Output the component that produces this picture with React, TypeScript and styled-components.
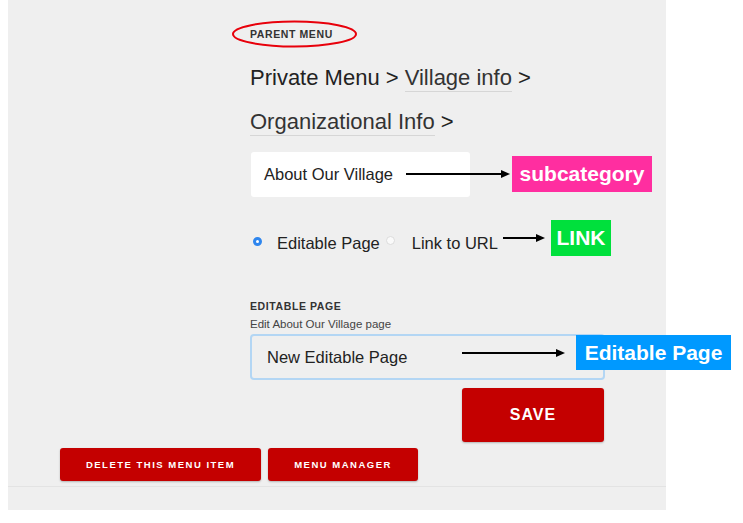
import React from "react";
import styled, { createGlobalStyle } from "styled-components";

const Global = createGlobalStyle`
  html, body { margin: 0; padding: 0; background: #ffffff; }
  body { font-family: "Liberation Sans", Arial, Helvetica, sans-serif; color: #222; }
`;

const Panel = styled.div`
  margin-left: 8px;
  width: 658px;
  height: 510px;
  background: #efefef;
  display: flex;
  flex-direction: column;
  box-sizing: border-box;
  padding-top: 28px;
`;

const Content = styled.div`
  padding-left: 242px;
  display: flex;
  flex-direction: column;
  align-items: flex-start;
`;

const SectionLabel = styled.div<{ $top?: number }>`
  position: relative;
  font-size: 10.5px;
  line-height: 12px;
  font-weight: bold;
  color: #333;
  letter-spacing: 0.6px;
  margin-top: ${(p) => p.$top ?? 0}px;
`;

const Ellipse = styled.svg`
  position: absolute;
  left: -18px;
  top: -8px;
  overflow: visible;
`;

const Crumbs = styled.div`
  margin-top: 16px;
  font-size: 22px;
  line-height: 44px;
  color: #222;
`;

const CrumbLine = styled.div`
  white-space: nowrap;
`;

const CrumbLink = styled.span`
  color: #333;
  border-bottom: 1px solid #d6d6d6;
  padding-bottom: 1px;
`;

const FieldRow = styled.div<{ $top: number }>`
  position: relative;
  margin-top: ${(p) => p.$top}px;
`;

const WhiteBox = styled.div`
  width: 219px;
  height: 45px;
  margin-left: 1px;
  background: #ffffff;
  border-radius: 3px;
  box-sizing: border-box;
  padding-left: 13px;
  display: flex;
  align-items: center;
  font-size: 16.5px;
  color: #222;
`;

const RadioRow = styled.div`
  position: relative;
  margin-top: 36px;
  height: 20px;
  display: flex;
  align-items: center;
  font-size: 16.5px;
  color: #222;
`;

const Radio = styled.span<{ $on?: boolean }>`
  width: 9px;
  height: 9px;
  border-radius: 50%;
  box-sizing: border-box;
  display: inline-block;
  margin: ${(p) => (p.$on ? "-4px 15px 0 3px" : "-5px 17px 0 6px")};
  background: ${(p) => (p.$on ? "#ffffff" : "#fafafa")};
  border: ${(p) => (p.$on ? "3px solid #2f86ee" : "1px solid #dcdcdc")};
`;

const Hint = styled.div`
  margin-top: 6px;
  font-size: 11.5px;
  line-height: 12px;
  color: #444;
`;

const TextInput = styled.div`
  width: 355px;
  height: 46px;
  box-sizing: border-box;
  border: 2px solid #b3d6f4;
  border-radius: 4px;
  padding-left: 15px;
  display: flex;
  align-items: center;
  font-size: 16.5px;
  color: #222;
`;

const Button = styled.button<{ $w: number; $h: number; $fs: number; $ls: number }>`
  width: ${(p) => p.$w}px;
  height: ${(p) => p.$h}px;
  background: #c40000;
  color: #ffffff;
  border: none;
  border-radius: 3px;
  box-shadow: 0 1px 2px rgba(0, 0, 0, 0.25);
  font-family: "Liberation Sans", Arial, sans-serif;
  font-weight: bold;
  font-size: ${(p) => p.$fs}px;
  letter-spacing: ${(p) => p.$ls}px;
  padding: 0;
  cursor: pointer;
`;

const SaveWrap = styled.div`
  margin-top: 8px;
  margin-left: 212px;
`;

const BottomRow = styled.div`
  margin-top: 6px;
  padding-left: 52px;
  display: flex;
  gap: 7px;
`;

const Separator = styled.div`
  margin-top: 5px;
  height: 1px;
  background: #e3e3e3;
`;

const Annotation = styled.div<{ $left: number; $top: number }>`
  position: absolute;
  left: ${(p) => p.$left}px;
  top: ${(p) => p.$top}px;
  display: flex;
  align-items: center;
`;

const Tag = styled.div<{ $bg: string; $w: number; $h: number }>`
  background: ${(p) => p.$bg};
  width: ${(p) => p.$w}px;
  height: ${(p) => p.$h}px;
  color: #ffffff;
  font-weight: bold;
  font-size: 21px;
  display: flex;
  align-items: center;
  justify-content: center;
  white-space: nowrap;
`;

const Arrow = ({ len, gap }: { len: number; gap: number }) => (
  <svg width={len + gap} height="10" viewBox={`0 0 ${len + gap} 10`} style={{ display: "block" }}>
    <line x1="0" y1="5" x2={len - 8} y2="5" stroke="#000" strokeWidth="2" />
    <polygon points={`${len - 9},1 ${len},5 ${len - 9},9`} fill="#000" />
  </svg>
);

export default function App() {
  return (
    <>
      <Global />
      <Panel>
        <Content>
          <SectionLabel>
            PARENT MENU
            <Ellipse width="125" height="28" viewBox="0 0 125 28">
              <ellipse cx="62.5" cy="14" rx="61.5" ry="12.5" fill="none" stroke="#e8000b" strokeWidth="2" />
            </Ellipse>
          </SectionLabel>
          <Crumbs>
            <CrumbLine>
              Private Menu &gt; <CrumbLink>Village info</CrumbLink> &gt;
            </CrumbLine>
            <CrumbLine>
              <CrumbLink>Organizational Info</CrumbLink> &gt;
            </CrumbLine>
          </Crumbs>
          <FieldRow $top={8}>
            <WhiteBox>About Our Village</WhiteBox>
            <Annotation $left={156} $top={4}>
              <Arrow len={104} gap={2} />
              <Tag $bg="#ff2ea0" $w={140} $h={36}>subcategory</Tag>
            </Annotation>
          </FieldRow>
          <RadioRow>
            <Radio $on />
            <span>Editable Page</span>
            <Radio />
            <span>Link to URL</span>
            <Annotation $left={253} $top={-13}>
              <Arrow len={42} gap={6} />
              <Tag $bg="#00e03c" $w={60} $h={36}>LINK</Tag>
            </Annotation>
          </RadioRow>
          <SectionLabel $top={47}>EDITABLE PAGE</SectionLabel>
          <Hint>Edit About Our Village page</Hint>
          <FieldRow $top={4}>
            <TextInput>New Editable Page</TextInput>
            <Annotation $left={212} $top={1}>
              <Arrow len={103} gap={11} />
              <Tag $bg="#0099ff" $w={155} $h={35}>Editable Page</Tag>
            </Annotation>
          </FieldRow>
          <SaveWrap>
            <Button $w={142} $h={54} $fs={16} $ls={1}>SAVE</Button>
          </SaveWrap>
        </Content>
        <BottomRow>
          <Button $w={201} $h={33} $fs={9.5} $ls={1.5}>DELETE THIS MENU ITEM</Button>
          <Button $w={150} $h={33} $fs={9.5} $ls={1.5}>MENU MANAGER</Button>
        </BottomRow>
        <Separator />
      </Panel>
    </>
  );
}
